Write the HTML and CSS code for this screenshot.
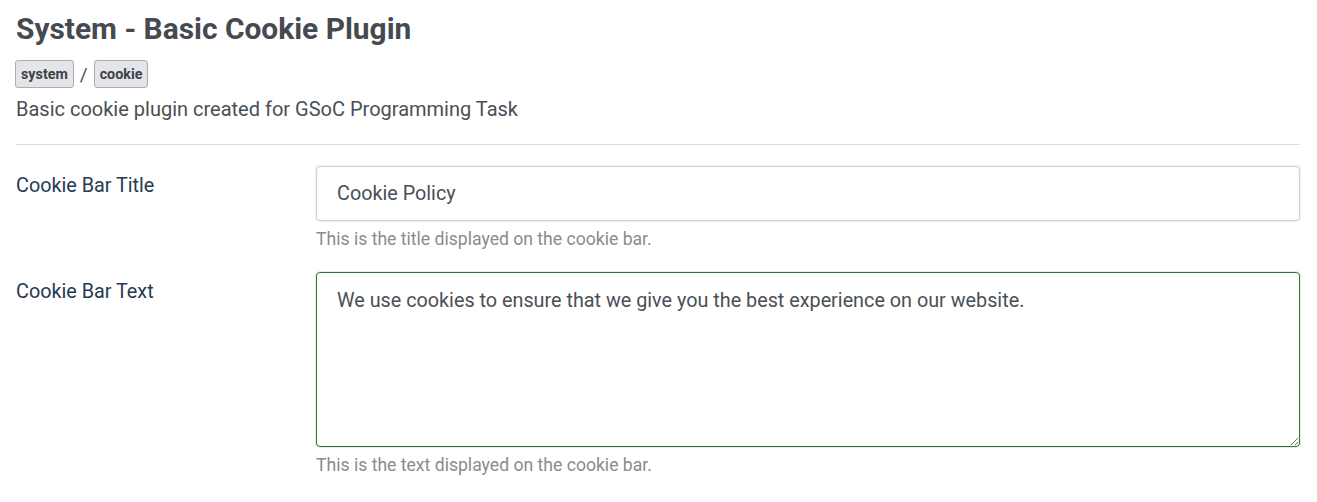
FILE: index.html
```html
<!DOCTYPE html>
<html>
<head>
<meta charset="utf-8">
<link rel="stylesheet" href="styles.css">
</head>
<body>
<div class="page">
  <h1 class="title">System - Basic Cookie Plugin</h1>
  <div class="tags">
    <span class="badge">system</span>
    <span class="sep">/</span>
    <span class="badge">cookie</span>
  </div>
  <p class="desc">Basic cookie plugin created for GSoC Programming Task</p>
  <hr class="rule">
  <div class="row">
    <label class="label">Cookie Bar Title</label>
    <div class="control">
      <input class="input" type="text" value="Cookie Policy">
      <div class="help">This is the title displayed on the cookie bar.</div>
    </div>
  </div>
  <div class="row">
    <label class="label">Cookie Bar Text</label>
    <div class="control">
      <textarea class="textarea">We use cookies to ensure that we give you the best experience on our website.</textarea>
      <div class="help">This is the text displayed on the cookie bar.</div>
    </div>
  </div>
</div>
</body>
</html>
```
FILE: styles.css
```css
html, body {
  margin: 0;
  padding: 0;
  background: #ffffff;
}
body {
  font-family: Roboto, "Liberation Sans", sans-serif;
  color: #495057;
}
.page {
  padding: 8px 17px 0 16px;
}
.title {
  margin: 0;
  font-size: 29.9px;
  font-weight: 700;
  line-height: 42px;
  color: #454a50;
}
.tags {
  display: flex;
  align-items: center;
  gap: 6px;
  margin-top: 10px;
  margin-left: -1px;
}
.badge {
  display: inline-block;
  box-sizing: border-box;
  height: 28px;
  line-height: 26px;
  padding: 0 5px;
  font-size: 14.3px;
  font-weight: 700;
  color: #3d4248;
  background: #e3e5e9;
  border: 1px solid #a9aeb5;
  border-radius: 3px;
}
.sep {
  font-size: 19px;
  color: #495057;
}
.desc {
  margin: 7px 0 0;
  font-size: 20px;
  line-height: 28px;
  color: #495057;
}
.rule {
  margin: 21px 0 0;
  border: 0;
  border-top: 1px solid #dcdde0;
}
.row {
  display: flex;
  margin-top: 21px;
}
.row + .row {
  margin-top: 21px;
}
.label {
  flex: 0 0 300px;
  font-size: 19.8px;
  line-height: 28px;
  color: #263a54;
  padding-top: 6px;
}
.control {
  flex: 1;
  display: flex;
  flex-direction: column;
}
.input, .textarea {
  box-sizing: border-box;
  width: 100%;
  font-family: Roboto, "Liberation Sans", sans-serif;
  font-size: 19.8px;
  color: #495057;
  border-radius: 4px;
  background: #fff;
  margin: 0;
}
.input {
  height: 55px;
  padding: 0 20px;
  border: 1px solid #cfd2d6;
  box-shadow: 0 0 0 1px #eceef0;
}
.textarea {
  height: 175px;
  padding: 14px 20px;
  border: 1px solid #3d6e42;
  box-shadow: 0 0 0 1px #e2efe2;
  resize: vertical;
  line-height: 28px;
  outline: none;
}
.help {
  margin-top: 6px;
  font-size: 17.6px;
  line-height: 24px;
  color: #888c91;
}
```
